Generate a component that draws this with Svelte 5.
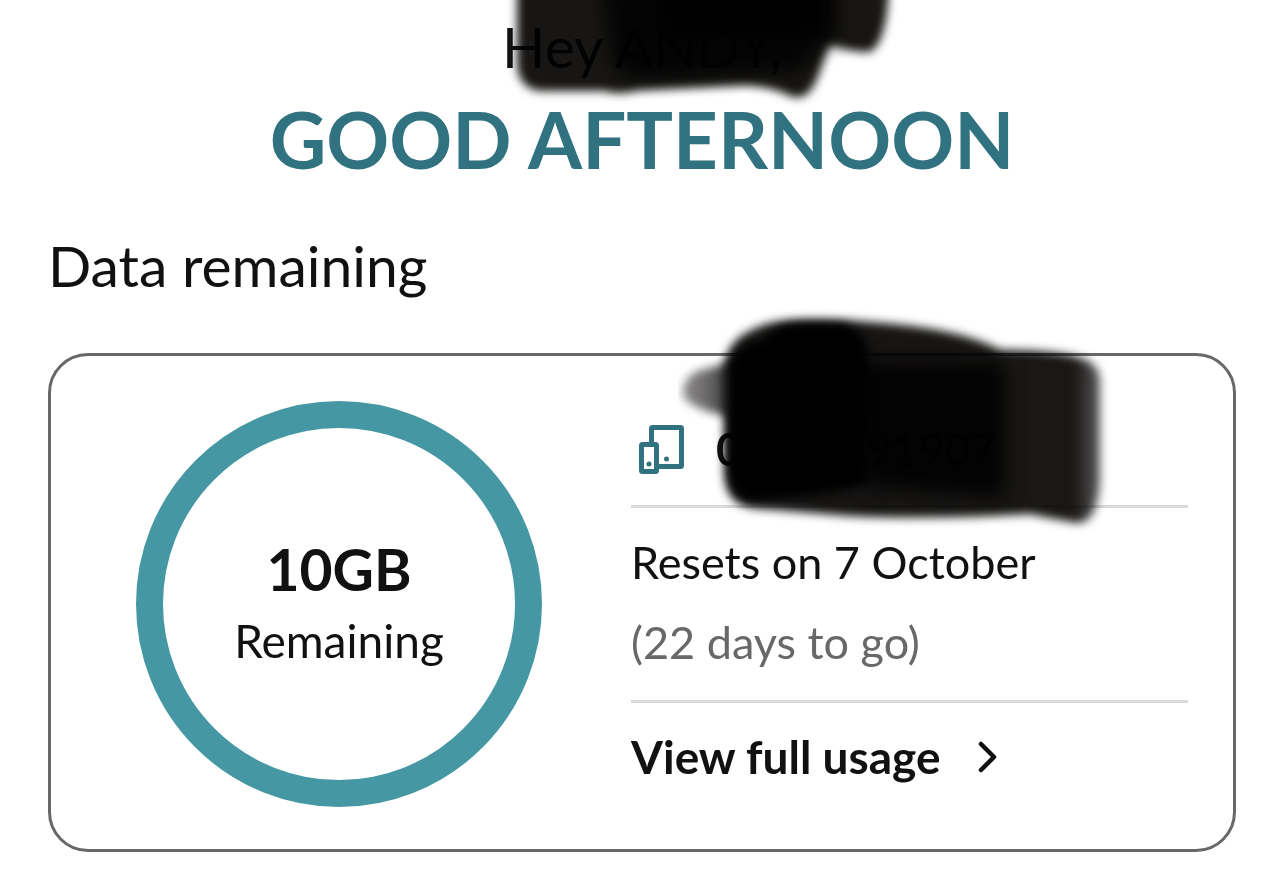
<script>
	let greeting = 'GOOD AFTERNOON';
	let allowance = { amount: '10GB', label: 'Remaining' };
	let reset = { date: 'Resets on 7 October', left: '(22 days to go)' };
</script>

<main>
	<header>
		<p class="hey">Hey ANDY,</p>
		<h1>{greeting}</h1>
		<svg class="scribble top" viewBox="500 0 400 120" width="400" height="120" aria-hidden="true">
			<defs>
				<filter id="soft" x="-10%" y="-10%" width="120%" height="120%" color-interpolation-filters="sRGB">
					<feGaussianBlur stdDeviation="5" />
				</filter>
				<filter id="softer" x="-20%" y="-20%" width="140%" height="140%" color-interpolation-filters="sRGB">
					<feGaussianBlur stdDeviation="9" />
				</filter>
				<linearGradient id="smear" x1="0" x2="1">
					<stop offset="0" stop-color="#8a8889" />
					<stop offset="0.5" stop-color="#6b696a" />
					<stop offset="1" stop-color="#333" />
				</linearGradient>
				<linearGradient id="stroke" x1="0" x2="1">
					<stop offset="0" stop-color="#141312" />
					<stop offset="0.93" stop-color="#191816" />
					<stop offset="1" stop-color="#5a5859" />
				</linearGradient>
			</defs>
			<path filter="url(#soft)" fill="#171614" d="M517 -20V66Q520 92 546 91H604Q622 96 638 90L745 85Q770 86 790 96Q810 104 820 70L829 44Q852 53 870 52Q888 42 889 -20Z" />
			<path filter="url(#softer)" fill="#050404" d="M600 -30H836V42L818 46Q812 70 790 72L745 74L640 80Q620 78 612 60Z" />
			<path filter="url(#softer)" fill="#000" d="M650 -30H820V30L670 34Z" />
		</svg>
	</header>

	<h2>Data remaining</h2>

	<section class="card">
		<div class="ring">
			<strong>{allowance.amount}</strong>
			<span>{allowance.label}</span>
		</div>

		<div class="details">
			<div class="row number">
				<svg class="devices" viewBox="0 0 48 52" width="48" height="52" fill="none" aria-hidden="true">
					<path d="M13.500 18V4.500a1 1 0 0 1 1-1H42.500a1 1 0 0 1 1 1V41.500a1 1 0 0 1-1 1H20" stroke="#317281" stroke-width="5" />
					<rect x="3.500" y="20.500" width="15" height="27" rx="1" stroke="#317281" stroke-width="5" />
					<circle cx="11" cy="40" r="2.500" fill="#317281" />
					<circle cx="28.500" cy="35" r="2.500" fill="#317281" />
				</svg>
				<span>0</span>
				<span class="tail">91907</span>
				<svg class="scribble phone" viewBox="670 300 450 240" width="450" height="240" aria-hidden="true">
					<path filter="url(#soft)" fill="url(#smear)" d="M732 362L698 371Q682 378 683 396Q692 410 732 417Z" />
					<path filter="url(#soft)" fill="url(#stroke)" d="M724 368Q726 340 756 328Q785 314 870 322Q960 328 1000 350Q1060 350 1084 359Q1101 366 1100 384V480Q1098 522 1078 523Q1058 520 1030 514Q930 520 850 516L752 508Q724 504 724 470Z" />
					<path filter="url(#softer)" fill="#040303" d="M850 362H1004V498L868 486Z" />
					<path filter="url(#soft)" fill="#000" d="M729 366Q740 342 766 340Q770 326 800 324H840Q868 330 868 356V484Q840 494 752 500Q730 496 729 466Z" />
				</svg>
			</div>
			<div class="row resets">
				<p>{reset.date}</p>
				<p class="muted">{reset.left}</p>
			</div>
			<a class="row usage" href="#usage">
				View full usage
				<svg viewBox="0 0 20 32" width="20" height="32" fill="none" aria-hidden="true">
					<path d="M3 3L16 16L3 29" stroke="#111" stroke-width="4.500" stroke-linecap="round" stroke-linejoin="round" />
				</svg>
			</a>
		</div>
	</section>
</main>

<style>
	:global(body) {
		background: #fff;
	}

	main {
		padding: 10px 48px 36px;
		color: #111;
		font-family: Lato, "Open Sans", sans-serif;
		overflow: hidden;
	}

	h1,
	h2,
	p {
		margin: 0;
	}

	header {
		position: relative;
		text-align: center;
	}

	.hey,
	h2 {
		font-size: 57px;
		font-weight: 400;
		line-height: 72px;
	}

	h1 {
		margin-top: 9px;
		color: #317281;
		font-size: 78px;
		font-weight: 700;
		line-height: 96px;
		white-space: nowrap;
	}

	h2 {
		margin: 42px 0 52px;
	}

	.scribble {
		position: absolute;
		mix-blend-mode: multiply;
		pointer-events: none;
	}

	.scribble.top {
		top: -10px;
		left: calc(50% - 142px);
	}

	.scribble.phone {
		top: -109px;
		left: 39px;
	}

	.card {
		display: grid;
		grid-template-columns: auto 1fr;
		gap: 89px;
		padding: 45px 45px 42px 85px;
		border: 3px solid #68686a;
		border-radius: 40px;
	}

	.ring {
		display: flex;
		flex-direction: column;
		align-items: center;
		justify-content: center;
		box-sizing: border-box;
		width: 406px;
		height: 406px;
		padding-top: 2px;
		border: 27px solid #4497a3;
		border-radius: 50%;
	}

	.ring strong {
		font-size: 57px;
		line-height: 72px;
	}

	.ring span {
		font-size: 46px;
		line-height: 72px;
	}

	.details {
		padding-top: 8px;
		font-size: 45px;
		line-height: 80px;
	}

	.row + .row {
		border-top: 3px solid #dadadb;
	}

	.number {
		position: relative;
		display: flex;
		align-items: center;
		padding-bottom: 16px;
		font-weight: 700;
	}

	.devices {
		margin: 2px 30px 0 7px;
	}

	.tail {
		margin-left: 124px;
	}

	.resets {
		padding: 14px 0 18px;
	}

	.muted {
		color: #68686a;
	}

	.usage {
		display: flex;
		align-items: center;
		gap: 38px;
		padding-top: 14px;
		color: inherit;
		font-size: 46px;
		font-weight: 700;
		text-decoration: none;
	}
</style>
